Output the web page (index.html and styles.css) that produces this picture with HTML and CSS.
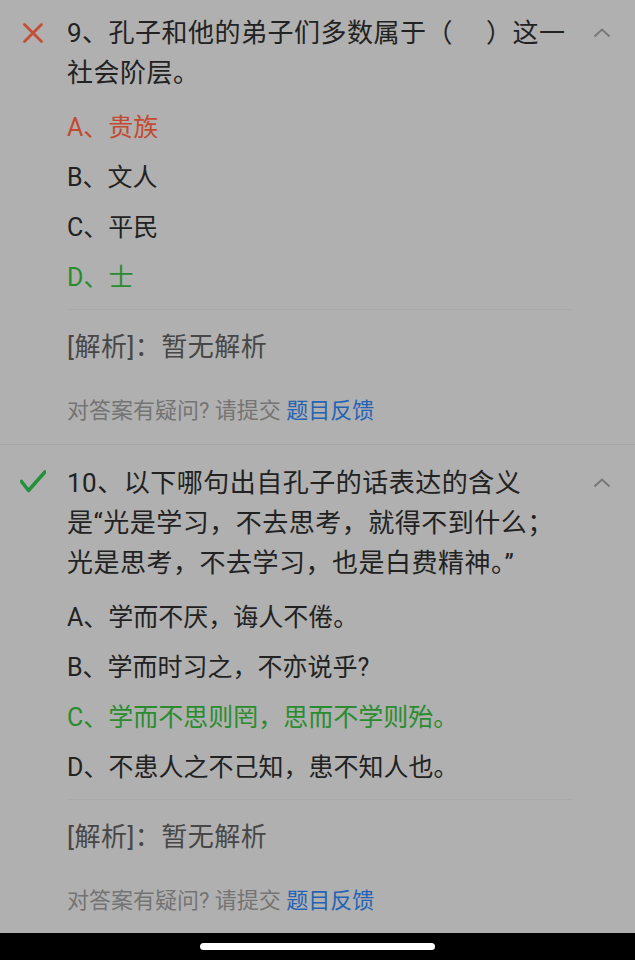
FILE: index.html
```html
<!DOCTYPE html>
<html lang="zh-CN">
<head>
<meta charset="utf-8">
<title>答题解析</title>
<link rel="stylesheet" href="styles.css">
</head>
<body>
<div class="list">
  <section class="card">
    <div class="head">
      <svg class="mark" viewBox="0 0 22 22" width="22" height="22"><path d="M2.5 2.5 L19.5 19.5 M19.5 2.5 L2.5 19.5" stroke="#c44e36" stroke-width="2.8" fill="none" stroke-linecap="round"/></svg>
      <div class="title">9、孔子和他的弟子们多数属于（&emsp;&thinsp;）这一社会阶层。</div>
      <svg class="chev" viewBox="0 0 18 10" width="18" height="10"><path d="M1.5 8.5 L9 1.5 L16.5 8.5" stroke="#767676" stroke-width="1.8" fill="none"/></svg>
    </div>
    <ul class="options">
      <li class="wrong">A、贵族</li>
      <li>B、文人</li>
      <li>C、平民</li>
      <li class="right">D、士</li>
    </ul>
    <div class="analysis">[解析]：暂无解析</div>
    <div class="feedback">对答案有疑问? 请提交 <a class="link">题目反馈</a></div>
  </section>
  <section class="card">
    <div class="head">
      <svg class="mark" viewBox="0 0 26 24" width="26" height="24"><path d="M1.5 11.5 L8.5 20.5 L25 2" stroke="#22913a" stroke-width="3.6" fill="none" stroke-linejoin="round" stroke-linecap="round"/></svg>
      <div class="title">10、以下哪句出自孔子的话表达的含义<span class="nb">是“光</span>是学习，不去思考，就得不到什么；光是思考，不去学习，也是白费精神。”</div>
      <svg class="chev" viewBox="0 0 18 10" width="18" height="10"><path d="M1.5 8.5 L9 1.5 L16.5 8.5" stroke="#767676" stroke-width="1.8" fill="none"/></svg>
    </div>
    <ul class="options">
      <li>A、学而不厌，诲人不倦。</li>
      <li>B、学而时习之，不亦说乎?</li>
      <li class="right">C、学而不思则罔，思而不学则殆。</li>
      <li>D、不患人之不己知，患不知人也。</li>
    </ul>
    <div class="analysis">[解析]：暂无解析</div>
    <div class="feedback">对答案有疑问? 请提交 <a class="link">题目反馈</a></div>
  </section>
</div>
<div class="navbar"><div class="pill"></div></div>
</body>
</html>
```
FILE: styles.css
```css
html, body {
  margin: 0;
  padding: 0;
  background: #b0b0b0;
  height: 100%;
  overflow: hidden;
}
body {
  font-family: "Roboto", "Noto Sans CJK SC", sans-serif;
  color: #222;
}
.list {
  margin-top: -5px;
}
.card {
  padding-top: 18px;
  padding-bottom: 13px;
  border-bottom: 1px solid #a6a6a6;
}
.head {
  display: grid;
  grid-template-columns: 67px 505px 1fr;
  align-items: start;
}
.mark {
  display: block;
  margin-top: 9px;
  margin-left: 22px;
}
.card + .card .mark {
  margin-left: 20px;
  margin-top: 7px;
}
.title {
  font-size: 26px;
  letter-spacing: 0.5px;
  line-height: 40px;
  color: #222;
}
.nb {
  white-space: nowrap;
}
.chev {
  display: block;
  margin-top: 15px;
  margin-left: 21px;
}
.options {
  list-style: none;
  margin: 10px 63px 0 67px;
  padding: 0 0 6px 0;
  border-bottom: 1px solid #a9a9a9;
}
.options li {
  font-size: 25px;
  line-height: 50px;
  height: 50px;
  color: #222;
  white-space: nowrap;
}
.options li.wrong {
  color: #c24a30;
}
.options li.right {
  color: #2a8c2e;
}
.analysis {
  margin: 17px 63px 0 67px;
  font-size: 26px;
  letter-spacing: 0.5px;
  line-height: 40px;
  color: #474747;
}
.feedback {
  margin: 24px 63px 0 67px;
  font-size: 22px;
  line-height: 40px;
  color: #747474;
}
.link {
  color: #2463b4;
}
.navbar {
  position: fixed;
  left: 0;
  right: 0;
  bottom: 0;
  height: 27px;
  background: #000;
  display: flex;
  justify-content: center;
}
.pill {
  margin-top: 10px;
  width: 235px;
  height: 7px;
  border-radius: 4px;
  background: #fff;
}
```
